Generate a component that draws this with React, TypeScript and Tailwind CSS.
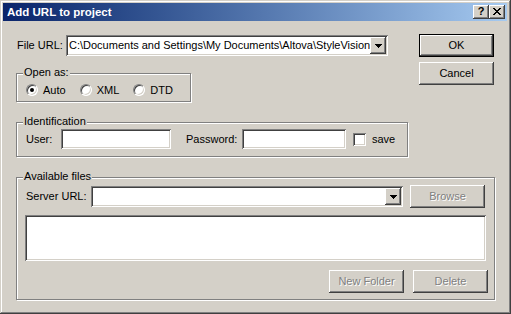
import React from "react";

const raised =
  "shadow-[inset_-1px_-1px_0_#404040,inset_1px_1px_0_#ffffff,inset_-2px_-2px_0_#808080,inset_2px_2px_0_#d4d0c8]";
const sunken =
  "shadow-[inset_1px_1px_0_#808080,inset_-1px_-1px_0_#ffffff,inset_2px_2px_0_#404040,inset_-2px_-2px_0_#d4d0c8]";

function Arrow() {
  return (
    <svg width="7" height="4" viewBox="0 0 7 4" shapeRendering="crispEdges">
      <rect x="0" y="0" width="7" height="1" fill="#000" />
      <rect x="1" y="1" width="5" height="1" fill="#000" />
      <rect x="2" y="2" width="3" height="1" fill="#000" />
      <rect x="3" y="3" width="1" height="1" fill="#000" />
    </svg>
  );
}

function Combo({ width, text }: { width: string; text?: string }) {
  return (
    <div className={`${width} h-[21px] bg-white ${sunken} p-[2px] flex items-center`}>
      <div className="flex-1 pl-[1px] text-[11px] leading-[17px] whitespace-nowrap overflow-hidden text-black">
        {text}
      </div>
      <div className={`w-[16px] h-[17px] bg-[#d4d0c8] ${raised} flex items-center justify-center`}>
        <Arrow />
      </div>
    </div>
  );
}

function Button({
  label,
  disabled,
  isDefault,
  className = "",
}: {
  label: string;
  disabled?: boolean;
  isDefault?: boolean;
  className?: string;
}) {
  const inner = (
    <div
      className={`w-full h-full bg-[#d4d0c8] ${raised} flex items-center justify-center text-[11px] ${
        disabled ? "text-[#808080] [text-shadow:1px_1px_0_#ffffff]" : "text-black"
      }`}
    >
      {label}
    </div>
  );
  if (isDefault) {
    return <div className={`w-[75px] h-[23px] border border-black ${className}`}>{inner}</div>;
  }
  return <div className={`w-[75px] h-[23px] ${className}`}>{inner}</div>;
}

function Radio({ checked }: { checked?: boolean }) {
  return (
    <div className="w-[12px] h-[12px] rounded-full bg-white border border-t-[#808080] border-l-[#808080] border-r-white border-b-white shadow-[inset_1px_1px_0_#404040,inset_-1px_-1px_0_#d4d0c8] flex items-center justify-center">
      {checked && <div className="w-[4px] h-[4px] rounded-full bg-black" />}
    </div>
  );
}

function Group({
  title,
  className,
  children,
}: {
  title: string;
  className: string;
  children: React.ReactNode;
}) {
  return (
    <div
      className={`relative border border-[#808080] shadow-[1px_1px_0_#ffffff,inset_1px_1px_0_#ffffff] ${className}`}
    >
      <span className="absolute -top-[8px] left-[6px] bg-[#d4d0c8] px-[1px] text-[11px] leading-[13px] text-black">
        {title}
      </span>
      {children}
    </div>
  );
}

export default function App() {
  return (
    <div
      className={`w-[511px] h-[314px] bg-[#d4d0c8] pt-[3px] pl-[3px] pr-[4px] pb-[4px] flex flex-col font-['Liberation_Sans',Arial,sans-serif] shadow-[inset_-1px_-1px_0_#404040,inset_1px_1px_0_#d4d0c8,inset_-2px_-2px_0_#808080,inset_2px_2px_0_#ffffff]`}
    >
      {/* Title bar */}
      <div className="h-[18px] flex items-center justify-between bg-gradient-to-r from-[#0a246a] to-[#a6caf0] pl-[4px] pr-[2px]">
        <span className="text-white font-bold text-[11.5px] leading-[18px]">Add URL to project</span>
        <div className="flex gap-[0px]">
          <div className={`w-[16px] h-[14px] bg-[#d4d0c8] ${raised} flex items-center justify-center text-[11px] font-bold leading-none text-black pb-[1px]`}>
            ?
          </div>
          <div className={`w-[16px] h-[14px] bg-[#d4d0c8] ${raised} flex items-center justify-center pb-[1px]`}>
            <svg width="8" height="7" viewBox="0 0 8 7" shapeRendering="crispEdges">
              <path
                d="M0 0h2v1h-2z M6 0h2v1h-2z M1 1h2v1h-2z M5 1h2v1h-2z M2 2h4v1h-4z M3 3h2v1h-2z M2 4h4v1h-4z M1 5h2v1h-2z M5 5h2v1h-2z M0 6h2v1h-2z M6 6h2v1h-2z"
                fill="#000"
              />
            </svg>
          </div>
        </div>
      </div>

      {/* Body */}
      <div className="flex-1 pl-[13px] text-[11px] text-black">
        <div className="flex items-start">
          {/* Left column */}
          <div className="w-[392px] flex flex-col">
            <div className="flex items-center h-[21px] mt-[14px]">
              <span className="w-[50px] pl-[1px]">File URL:</span>
              <Combo width="w-[322px]" text="C:\Documents and Settings\My Documents\Altova\StyleVision" />
            </div>

            <Group title="Open as:" className="mt-[17px] w-[175px] h-[29px]">
              <div className="flex items-center h-full pt-[5px] pl-[9px]">
                <Radio checked />
                <span className="ml-[5px]">Auto</span>
                <div className="ml-[14px]">
                  <Radio />
                </div>
                <span className="ml-[5px]">XML</span>
                <div className="ml-[14px]">
                  <Radio />
                </div>
                <span className="ml-[5px]">DTD</span>
              </div>
            </Group>

            <Group title="Identification" className="mt-[20px] w-[392px] h-[35px]">
              <div className="flex items-center h-[20px] mt-[6px] pl-[9px]">
                <span className="w-[35px]">User:</span>
                <div className={`w-[110px] h-[20px] bg-white ${sunken}`} />
                <span className="w-[56px] ml-[15px]">Password:</span>
                <div className={`w-[104px] h-[20px] bg-white ${sunken}`} />
                <div className={`w-[13px] h-[13px] bg-white ml-[7px] ${sunken}`} />
                <span className="ml-[6px]">save</span>
              </div>
            </Group>
          </div>

          {/* Right column */}
          <div className="ml-[11px] flex flex-col">
            <Button label="OK" isDefault className="mt-[13px]" />
            <Button label="Cancel" className="mt-[5px]" />
          </div>
        </div>

        <Group title="Available files" className="mt-[20px] w-[479px] h-[123px]">
          <div className="flex flex-col pl-[8px] pt-[7px]">
            <div className="flex items-center h-[23px]">
              <span className="w-[66px] pl-[1px]">Server URL:</span>
              <Combo width="w-[312px]" />
              <Button label="Browse" disabled className="ml-[7px]" />
            </div>
            <div className={`mt-[7px] w-[461px] h-[46px] bg-white ${sunken}`} />
            <div className="flex justify-end mt-[9px] pr-[6px]">
              <Button label="New Folder" disabled />
              <Button label="Delete" disabled className="ml-[9px]" />
            </div>
          </div>
        </Group>
      </div>
    </div>
  );
}
